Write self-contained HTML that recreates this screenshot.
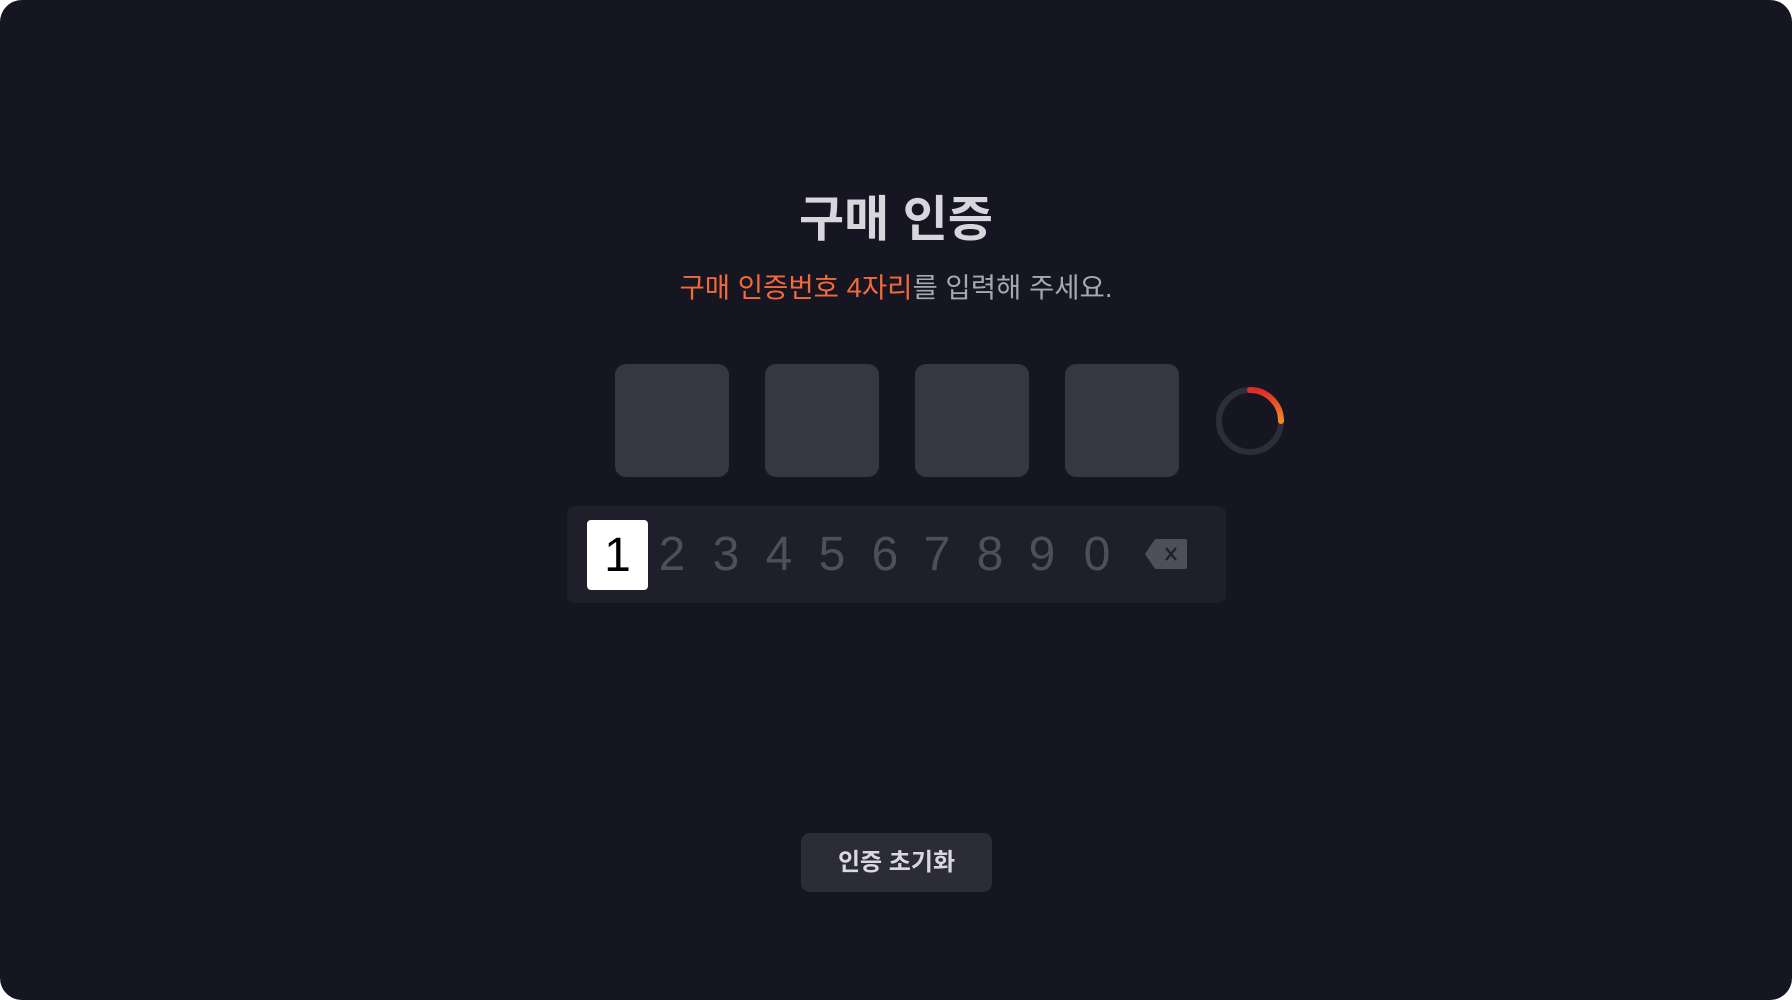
<!DOCTYPE html>
<html><head><meta charset="utf-8"><style>
html,body{margin:0;padding:0;width:1792px;height:1000px;background:#fff;overflow:hidden}
.page{position:absolute;left:0;top:0;width:1792px;height:1000px;background:#161623;border-radius:22px;font-family:"Liberation Sans","Noto Sans CJK KR",sans-serif}
.title{position:absolute;left:0;width:1792px;top:190px;text-align:center;color:#d6d6dc;font-size:49px;font-weight:700;line-height:60px}
.sub{position:absolute;left:0;width:1792px;top:269px;text-align:center;color:#a8a8b0;font-size:27.5px;line-height:38px}
.sub b{color:#f26a3a;font-weight:400}
.box{position:absolute;top:364px;width:114px;height:113px;background:#373744;border-radius:11px}
.pad{position:absolute;left:567px;top:506px;width:659px;height:97px;background:#1f1f2c;border-radius:8px}
.k{position:absolute;top:520px;height:70px;line-height:70px;font-size:48px;color:#4f4f5b;text-align:center;width:50px;margin-left:-25px}
.one{position:absolute;left:587px;top:520px;width:61px;height:70px;background:#fff;border-radius:4px;color:#000;font-size:48px;line-height:72px;text-align:center}
.btn{position:absolute;left:801px;top:833px;width:191px;height:59px;background:#2c2c39;border-radius:9px;color:#d8d8de;font-size:24px;font-weight:700;text-align:center;line-height:59px}
</style></head><body><div class="page">
<div class="title">구매 인증</div>
<div class="sub"><b>구매 인증번호 4자리</b>를 입력해 주세요.</div>
<div class="box" style="left:615px"></div>
<div class="box" style="left:765px"></div>
<div class="box" style="left:915px"></div>
<div class="box" style="left:1065px"></div>
<svg style="position:absolute;left:1212px;top:383px" width="76" height="76" viewBox="0 0 76 76">
<defs><linearGradient id="g" x1="0" y1="0" x2="0" y2="1"><stop offset="0" stop-color="#e02a2a"/><stop offset="1" stop-color="#f58a25"/></linearGradient></defs>
<circle cx="38" cy="38" r="31" fill="none" stroke="#2e2e3a" stroke-width="6"/>
<path d="M38 7 A31 31 0 0 1 69 38" fill="none" stroke="url(#g)" stroke-width="6" stroke-linecap="round"/>
</svg>
<div class="pad"></div>
<div class="one">1</div>
<div class="k" style="left:672px">2</div>
<div class="k" style="left:726px">3</div>
<div class="k" style="left:779px">4</div>
<div class="k" style="left:832px">5</div>
<div class="k" style="left:885px">6</div>
<div class="k" style="left:937px">7</div>
<div class="k" style="left:990px">8</div>
<div class="k" style="left:1042px">9</div>
<div class="k" style="left:1097px">0</div>
<svg style="position:absolute;left:1145px;top:539px" width="42" height="30" viewBox="0 0 42 30">
<path d="M10 0 H40 Q42 0 42 2 V28 Q42 30 40 30 H10 L0 15 Z" fill="#4f4f5b"/>
<path d="M21 9 L31 21 M31 9 L21 21" stroke="#1f1f2c" stroke-width="2.2"/>
</svg>
<div class="btn">인증 초기화</div>
</div></body></html>
